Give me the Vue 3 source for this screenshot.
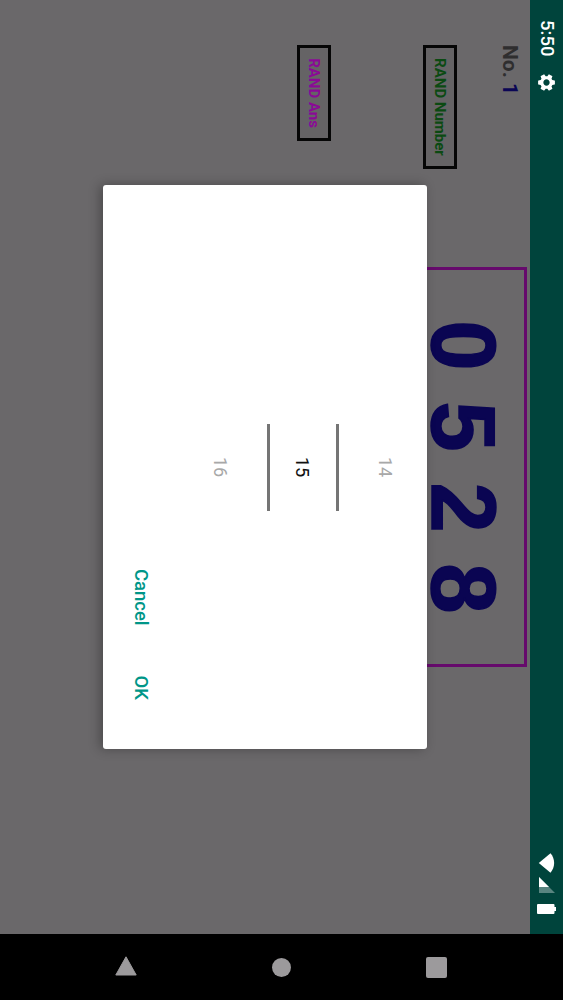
<script setup>
const digits = '0 5 2 8'
const pickerValues = [
  { value: 14, active: false },
  { value: 15, active: true },
  { value: 16, active: false },
]
</script>

<template>
  <div class="viewport">
    <div class="device">
      <div class="screen">
        <header class="status">
          <span class="time">5:50</span>
          <svg class="gear" viewBox="0 0 24 24" width="21" height="21">
            <path fill="#fff" d="M19.14 12.94c.04-.3.06-.61.06-.94 0-.32-.02-.64-.07-.94l2.03-1.58c.18-.14.23-.41.12-.61l-1.92-3.32c-.12-.22-.37-.29-.59-.22l-2.39.96c-.5-.38-1.03-.7-1.62-.94l-.36-2.54c-.04-.24-.24-.41-.48-.41h-3.84c-.24 0-.43.17-.47.41l-.36 2.54c-.59.24-1.13.57-1.62.94l-2.39-.96c-.22-.08-.47 0-.59.22L2.74 8.87c-.12.21-.08.47.12.61l2.03 1.58c-.05.3-.09.63-.09.94s.02.64.07.94l-2.03 1.58c-.18.14-.23.41-.12.61l1.92 3.32c.12.22.37.29.59.22l2.39-.96c.5.38 1.03.7 1.62.94l.36 2.54c.05.24.24.41.48.41h3.84c.24 0 .44-.17.47-.41l.36-2.54c.59-.24 1.13-.56 1.62-.94l2.39.96c.22.08.47 0 .59-.22l1.92-3.32c.12-.22.07-.47-.12-.61l-2.01-1.58zM12 15.6c-1.98 0-3.6-1.62-3.6-3.6s1.62-3.6 3.6-3.6 3.6 1.62 3.6 3.6-1.62 3.6-3.6 3.6z" />
          </svg>
          <span class="spacer"></span>
          <svg class="wifi" viewBox="0 0 22 18" width="20" height="17">
            <path fill="#fff" d="M11 17.500 0.300 4.600C3.200 2.100 7 .6 11 .6s7.800 1.500 10.700 4z" />
          </svg>
          <svg class="signal" viewBox="0 0 16 16" width="16" height="16">
            <polygon fill="#fff" fill-opacity="0.35" points="0,16 16,0 16,16" />
            <polygon fill="#fff" points="0,16 10,6 10,16" />
          </svg>
          <svg class="battery" viewBox="0 0 10 19" width="10" height="19">
            <path fill="#fff" d="M3 0h4v1.500h2a1 1 0 0 1 1 1V18a1 1 0 0 1-1 1H1a1 1 0 0 1-1-1V2.500a1 1 0 0 1 1-1h2z" />
          </svg>
        </header>

        <main class="content">
          <div class="side">
            <div class="counter">No. <span class="counter-value">1</span></div>
            <button class="action action-number" type="button">RAND Number</button>
            <button class="action action-answer" type="button">RAND Ans</button>
          </div>
          <div class="number-box">{{ digits }}</div>
        </main>
      </div>

      <nav class="nav">
        <svg viewBox="0 0 21 21" width="21" height="21">
          <rect x="0" y="0" width="21" height="21" rx="2" fill="#9c9a9c" />
        </svg>
        <svg viewBox="0 0 19 19" width="19" height="19">
          <circle cx="9.500" cy="9.500" r="9.500" fill="#9c9a9c" />
        </svg>
        <svg viewBox="0 0 22 22" width="22" height="22">
          <path fill="#9c9a9c" stroke="#9c9a9c" stroke-width="1" stroke-linejoin="round" d="M19 .8v20.400L.8 11z" />
        </svg>
      </nav>

      <section class="dialog">
        <div class="picker">
          <div
            v-for="item in pickerValues"
            :key="item.value"
            class="pick"
            :class="{ 'pick-active': item.active }"
          >{{ item.value }}</div>
        </div>
        <div class="actions">
          <span class="btn">Cancel</span>
          <span class="btn">OK</span>
        </div>
      </section>
    </div>
  </div>
</template>

<style>
html, body { margin: 0; background: #000; overflow: hidden; }
</style>

<style scoped>
.viewport {
  width: 563px;
  height: 1000px;
  overflow: hidden;
}
.device {
  position: relative;
  width: 1000px;
  height: 563px;
  display: flex;
  transform-origin: 0 0;
  transform: translateX(563px) rotate(90deg);
  font-family: Roboto, "Liberation Sans", sans-serif;
  background: #6a686a;
}
.screen {
  width: 934px;
  display: flex;
  flex-direction: column;
}
.status {
  height: 33px;
  background: #00443c;
  display: flex;
  align-items: center;
  padding: 0 20px 0 20px;
  color: #fff;
}
.time {
  font-size: 18.500px;
  font-weight: 500;
  line-height: 33px;
}
.gear { margin-left: 16px; }
.spacer { flex: 1; }
.signal { margin-left: 4px; margin-top: -1px; }
.wifi { margin-top: -1px; }
.battery { margin-left: 11px; }
.content {
  flex: 1;
  display: flex;
  padding-left: 45px;
  background: #6a686a;
}
.side {
  width: 222px;
  display: flex;
  flex-direction: column;
  align-items: flex-start;
  padding-top: 8px;
}
.counter {
  font-size: 21px;
  line-height: 24px;
  font-weight: 700;
  color: #2f2e2f;
  white-space: pre;
}
.counter-value { color: #0b0655; }
.action {
  height: 34px;
  box-sizing: border-box;
  border: 3px solid #060606;
  background: #656365;
  font: 700 15px/28px Roboto, "Liberation Sans", sans-serif;
  padding: 0;
  text-align: center;
}
.action-number {
  width: 124px;
  margin-top: 41px;
  color: #0b4a12;
}
.action-answer {
  width: 96px;
  margin-top: 92px;
  color: #8a0a96;
}
.number-box {
  width: 400px;
  height: 200px;
  box-sizing: border-box;
  margin-top: 3px;
  border: 3px solid #660a6c;
  text-align: center;
  font-family: "Liberation Sans", Arial, sans-serif;
  font-size: 90px;
  font-weight: 700;
  word-spacing: 6px;
  line-height: 123px;
  -webkit-text-stroke: 1.500px #0a0552;
  color: #0a0552;
  white-space: pre;
}
.nav {
  width: 66px;
  background: #000;
  display: flex;
  flex-direction: column;
  align-items: center;
  justify-content: center;
  gap: 135px;
}
.dialog {
  position: absolute;
  left: 185px;
  top: 136px;
  width: 564px;
  height: 324px;
  box-sizing: border-box;
  background: #fff;
  border-radius: 3px;
  box-shadow: 0 3px 12px rgba(0, 0, 0, 0.3);
  display: flex;
  flex-direction: column;
  align-items: center;
  padding-top: 7px;
}
.picker {
  display: flex;
  flex-direction: column;
  gap: 12px;
  width: 87px;
}
.pick {
  height: 69px;
  box-sizing: border-box;
  display: flex;
  align-items: center;
  justify-content: center;
  font-size: 18px;
  color: #a8a8a8;
}
.pick-active {
  color: #111;
  height: 72px;
  border-top: 3px solid #757575;
  border-bottom: 3px solid #757575;
}
.actions {
  align-self: flex-end;
  display: flex;
  gap: 50px;
  padding-right: 49px;
  margin-top: 33px;
}
.btn {
  font-size: 18.500px;
  font-weight: 500;
  line-height: 24px;
  color: #009688;
}
</style>
